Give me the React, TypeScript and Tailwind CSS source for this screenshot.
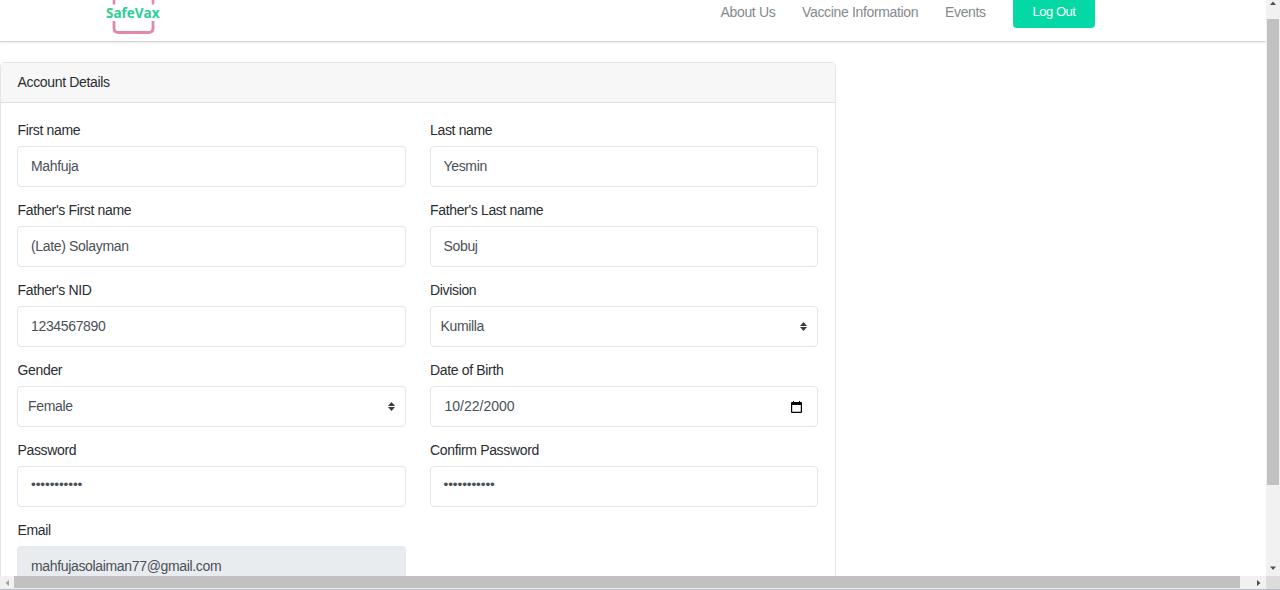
import type { ReactNode } from "react";

const boxClass =
  "flex h-[41px] w-full items-center rounded border border-[#e3e6e9] bg-white text-[#495057]";

function Field({ label, children }: { label: string; children: ReactNode }) {
  return (
    <div className="h-20">
      <div className="mb-1 flex h-6 items-center pb-px pl-[0.5px] text-[#292d31]">{label}</div>
      {children}
    </div>
  );
}

function TextField({ label, value }: { label: string; value: string }) {
  return (
    <Field label={label}>
      <input className={boxClass + " px-[13px] pb-0.5 tracking-[-0.34px] outline-none"} defaultValue={value} />
    </Field>
  );
}

function PasswordField({ label }: { label: string }) {
  return (
    <Field label={label}>
      <div className={boxClass + " px-[13px] pb-[3px] text-[13.6px] tracking-[-0.1px]"}>•••••••••••</div>
    </Field>
  );
}

function SelectField({ label, value }: { label: string; value: string }) {
  return (
    <Field label={label}>
      <div className={boxClass + " justify-between pl-2.5 pr-[10px]"}>
        <span className="pb-px">{value}</span>
        <svg width="7" height="9" viewBox="0 0 7 9" fill="#343a40">
          <path d="M0 4 3.5 0 7 4zM0 5 3.5 9 7 5z" />
        </svg>
      </div>
    </Field>
  );
}

export default function App() {
  return (
    <div className="flex h-[590px] w-[1280px] flex-col overflow-hidden bg-white font-['Liberation_Sans',Arial,sans-serif] text-[14px] leading-5 tracking-[-0.34px]">
      <div className="flex h-[576px]">
        <div className="flex w-[1266px] flex-col overflow-hidden">
          <header className="flex h-[42px] shrink-0 items-start border-b border-[#d2d4d4] shadow-[0_1px_2px_rgba(0,0,0,0.08)]">
            <svg className="ml-[100px] shrink-0 tracking-normal" width="66" height="41" viewBox="0 0 66 41">
              <path d="M14 0V4.500M53 0V4.500" stroke="#e287aa" strokeWidth="2.600" fill="none" />
              <path d="M14 21V28Q14 32.500 18.500 32.500H48.500Q53 32.500 53 28V21" stroke="#e287aa" strokeWidth="2.800" fill="none" />
              <text x="6" y="18" fontSize="13.500" className="font-['Open_Sans','Noto_Sans',sans-serif] font-bold" fill="#2bcf93">SafeVax</text>
            </svg>
            <nav className="ml-[554px] flex items-start text-[#848a8d]">
              <span className="mt-0.5 w-[82px] pl-[0.5px]">About Us</span>
              <span className="mt-0.5 w-[143px]">Vaccine Information</span>
              <span className="mt-0.5 w-[68px]">Events</span>
              <button className="h-7 w-[82px] rounded-b bg-[#04d9a5] pb-1 text-[13px] tracking-[-0.5px] text-white">Log Out</button>
            </nav>
          </header>
          <main className="mt-5 h-[560px] w-[836px] shrink-0 rounded-sm border border-[#e4e4e4]">
            <div className="flex h-10 items-center border-b border-[#dfdfdf] bg-[#f7f7f7] pb-px pl-[16.5px] text-[#292d31]">
              Account Details
            </div>
            <form className="grid grid-cols-2 gap-x-6 pl-4 pr-[17px] pt-[15px]">
              <TextField label="First name" value="Mahfuja" />
              <TextField label="Last name" value="Yesmin" />
              <TextField label="Father's First name" value="(Late) Solayman" />
              <TextField label="Father's Last name" value="Sobuj" />
              <TextField label="Father's NID" value="1234567890" />
              <SelectField label="Division" value="Kumilla" />
              <SelectField label="Gender" value="Female" />
              <Field label="Date of Birth">
                <div className={boxClass + " justify-between pl-[14px] pr-[15px]"}>
                  <span className="pb-0.5 tracking-normal">10/22/2000</span>
                  <svg width="11" height="12" viewBox="0 0 11 12" fill="#000">
                    <path fillRule="evenodd" d="M1 1h1V0h1v1h5V0h1v1h1q1 0 1 1v9q0 1-1 1H1q-1 0-1-1V2q0-1 1-1zm.2 3v6.800h8.600V4z" />
                  </svg>
                </div>
              </Field>
              <PasswordField label="Password" />
              <PasswordField label="Confirm Password" />
              <Field label="Email">
                <div className="flex h-[41px] items-center rounded border border-[#e4e8eb] bg-[#e9ecef] px-[13px] pb-0.5 text-[#495057]">
                  mahfujasolaiman77@gmail.com
                </div>
              </Field>
            </form>
          </main>
        </div>
        <div className="flex w-3.5 flex-col items-center bg-[#f1f1f1]">
          <svg className="h-[19px] shrink-0" width="14" height="19" viewBox="0 0 14 19">
            <path d="M4 5 7 1.500 10 5z" fill="#505050" />
          </svg>
          <div className="h-[466px] w-3 bg-[#c1c1c1]" />
          <svg className="mt-auto" width="14" height="14" viewBox="0 0 14 14">
            <path d="M4 4.500h6L7 8z" fill="#505050" />
          </svg>
        </div>
      </div>
      <div className="flex h-3.5 border-b border-[#b7bdc8] bg-[#f1f1f1]">
        <svg width="14" height="13" viewBox="0 0 14 13">
          <path d="M9 4v6L5.500 7z" fill="#a3a3a3" />
        </svg>
        <div className="h-3 w-[1226px] bg-[#c1c1c1]" />
        <svg className="ml-3" width="14" height="13" viewBox="0 0 14 13">
          <path d="M5 4v6l3.500-3z" fill="#505050" />
        </svg>
        <div className="ml-auto w-3.5 bg-[#dcdcdc]" />
      </div>
    </div>
  );
}
